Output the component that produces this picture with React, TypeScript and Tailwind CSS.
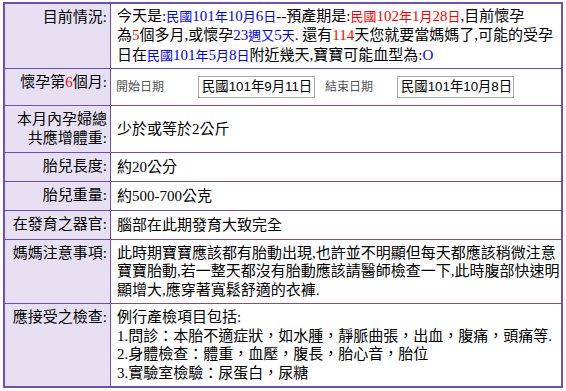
import type { ReactNode } from 'react';

interface RowProps {
  label: ReactNode;
  children: ReactNode;
  height: string;
  last?: boolean;
}

// one table row: lavender label cell on the left, white content cell on the right
function Row({ label, children, height, last = false }: RowProps) {
  return (
    <div className={`flex ${height} ${last ? '' : 'border-b border-[#6d4fb5]'}`}>
      <div className="w-[106px] shrink-0 border-r border-[#6d4fb5] bg-[#e6e0f2] pr-[3px] pt-[4px] text-right">
        {label}
      </div>
      <div className="flex-1 self-center pl-[6px]">{children}</div>
    </div>
  );
}

/**
 * Coloured date fragment. In the original the CJK glyphs of these
 * fragments render a bit smaller than the digits, so split them.
 */
function Hl({ text, color }: { text: string; color: 'blue' | 'red' }) {
  const parts = text.split(/([\u3400-\u9fff]+)/).filter(Boolean);
  return (
    <span className={color === 'blue' ? 'text-[#0000ff]' : 'text-[#ff0000]'}>
      {parts.map((p, i) =>
        /[\u3400-\u9fff]/.test(p) ? (
          <span key={i} className="text-[13px]">
            {p}
          </span>
        ) : (
          <span key={i}>{p}</span>
        )
      )}
    </span>
  );
}

function DateBox({ value }: { value: string }) {
  return (
    <div className="flex h-[22px] w-[117px] items-center border border-[#a9a9a9] bg-white pl-[3px] font-['Liberation_Sans','Noto_Sans_CJK_TC',sans-serif] text-[13.33px] leading-none text-black">
      {value}
    </div>
  );
}

export default function App() {
  return (
    <div className="min-h-[391px] w-[566px] bg-white pl-[3px] pt-[2px] font-['Liberation_Serif','Noto_Sans_CJK_TC',serif] text-[15px] leading-[18.5px] text-black">
      <div className="w-[560px] border-2 border-[#6d4fb5]">
        {/* 目前情況 */}
        <Row label="目前情況:" height="h-[65px]">
          <div className="whitespace-nowrap">
            今天是:<Hl text="民國101年10月6日" color="blue" />--預產期是:
            <Hl text="民國102年1月28日" color="red" />,目前懷孕
          </div>
          <div className="whitespace-nowrap">
            為<Hl text="5" color="red" />個多月,或懷孕<Hl text="23週又5天" color="blue" />. 還有
            <Hl text="114" color="red" />天您就要當媽媽了,可能的受孕
          </div>
          <div className="whitespace-nowrap">
            日在<Hl text="民國101年5月8日" color="blue" />附近幾天,寶寶可能血型為:
            <Hl text="O" color="blue" />
          </div>
        </Row>

        {/* 懷孕第6個月 */}
        <Row
          label={
            <span>
              懷孕第<span className="text-[#ff0000]">6</span>個月:
            </span>
          }
          height="h-[37px]"
        >
          <div className="flex items-center font-['Liberation_Sans','Noto_Sans_CJK_TC',sans-serif] text-[12px] text-[#555555]">
            <span className="w-[82px] -ml-[1px]">開始日期</span>
            <DateBox value="民國101年9月11日" />
            <span className="ml-[10px] w-[72px]">結束日期</span>
            <DateBox value="民國101年10月8日" />
          </div>
        </Row>

        <Row
          label={
            <>
              <div>本月內孕婦總</div>
              <div>共應增體重:</div>
            </>
          }
          height="h-[47px]"
        >
          少於或等於2公斤
        </Row>

        <Row label="胎兒長度:" height="h-[29px]">
          約20公分
        </Row>

        <Row label="胎兒重量:" height="h-[29px]">
          約500-700公克
        </Row>

        <Row label="在發育之器官:" height="h-[29px]">
          腦部在此期發育大致完全
        </Row>

        <Row label="媽媽注意事項:" height="h-[64px]">
          <div className="whitespace-nowrap">此時期寶寶應該都有胎動出現,也許並不明顯但每天都應該稍微注意</div>
          <div className="whitespace-nowrap">寶寶胎動,若一整天都沒有胎動應該請醫師檢查一下,此時腹部快速明</div>
          <div className="whitespace-nowrap">顯增大,應穿著寬鬆舒適的衣褲.</div>
        </Row>

        <Row label="應接受之檢查:" height="h-[82px]" last>
          <div className="whitespace-nowrap">例行產檢項目包括:</div>
          <div className="whitespace-nowrap">1.問診：本胎不適症狀，如水腫，靜脈曲張，出血，腹痛，頭痛等.</div>
          <div className="whitespace-nowrap">2.身體檢查：體重，血壓，腹長，胎心音，胎位</div>
          <div className="whitespace-nowrap">3.實驗室檢驗：尿蛋白，尿糖</div>
        </Row>
      </div>
    </div>
  );
}
